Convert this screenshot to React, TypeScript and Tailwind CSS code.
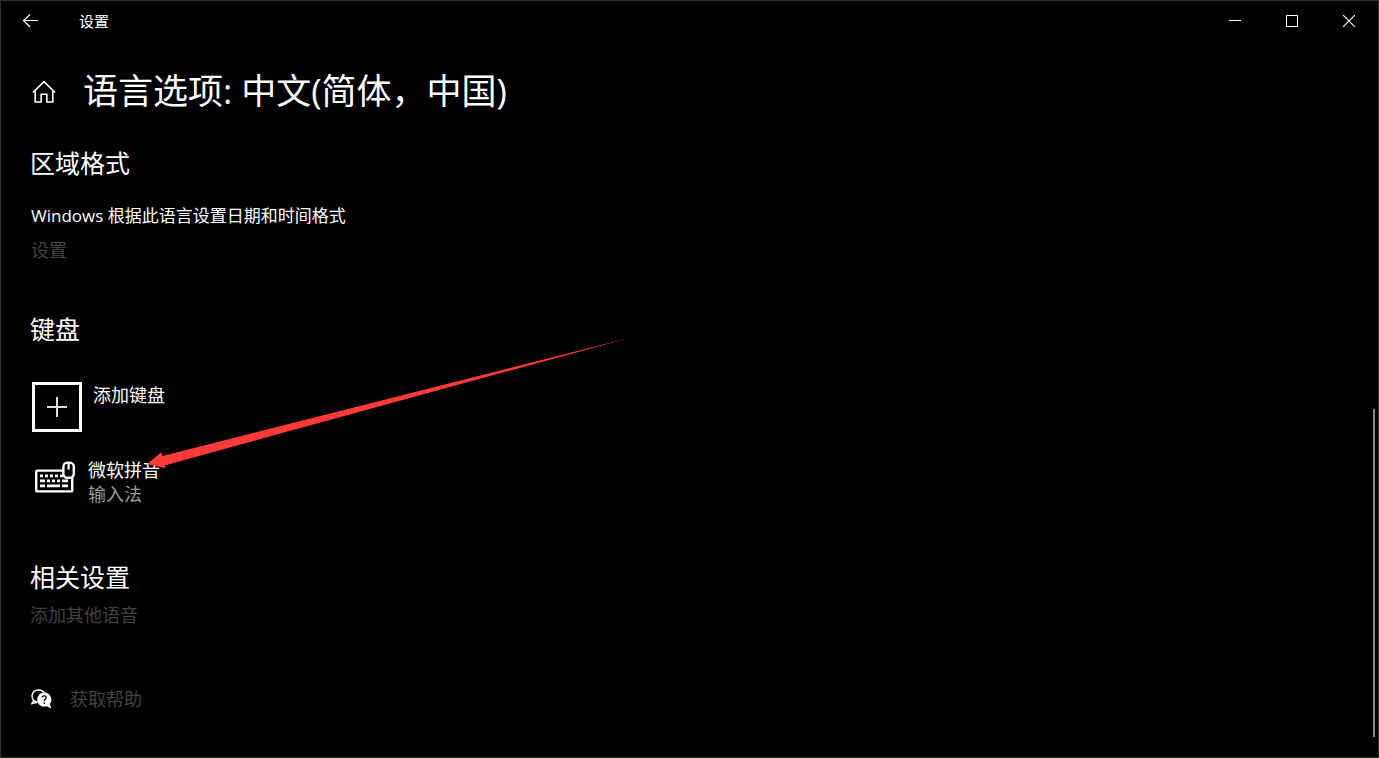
import type { ReactNode } from "react";

const fontStack = "font-['Open_Sans','Noto_Sans_CJK_SC',sans-serif]";

function TitleBar() {
  return (
    <header className="flex h-10 items-center pr-px">
      <button type="button" aria-label="返回" className="flex h-10 w-[58px] items-center justify-center">
        <svg width="16" height="14" viewBox="0 0 16 14" fill="none" stroke="#fff" strokeWidth="1.2">
          <path d="M16 6.5H1.5M8 0.5L1.5 6.5L8 13" />
        </svg>
      </button>
      <span className="flex-1 pl-5 text-[15px] leading-5">设置</span>
      <button type="button" aria-label="最小化" className="flex h-10 w-[57px] items-center justify-center">
        <svg width="12" height="12" viewBox="0 0 12 12" shapeRendering="crispEdges">
          <path d="M0 5h12v1H0z" fill="#fff" />
        </svg>
      </button>
      <button type="button" aria-label="最大化" className="flex h-10 w-[57px] items-center justify-center">
        <svg width="12" height="12" viewBox="0 0 12 12" fill="none" stroke="#fff">
          <path d="M.5 .5h11v11H.5z" />
        </svg>
      </button>
      <button type="button" aria-label="关闭" className="flex h-10 w-[57px] items-center justify-center">
        <svg width="12" height="12" viewBox="0 0 12 12" fill="none" stroke="#fff" strokeWidth="1.1">
          <path d="M0 0L12 12M12 0L0 12" />
        </svg>
      </button>
    </header>
  );
}

function HomeIcon() {
  return (
    <svg width="24" height="23" viewBox="0 0 24 23" fill="none" stroke="#fff" strokeWidth="1.6">
      <path d="M1 12.5L12 1.6L23 12.5" />
      <path d="M3.2 10.7V22H9.2V14.3H14.8V22H20.8V10.7" />
    </svg>
  );
}

function KeyboardIcon() {
  return (
    <svg width="42" height="32" viewBox="0 0 42 32" fill="none">
      <rect x="1.2" y="9.6" width="36" height="20.8" rx="1" stroke="#fff" strokeWidth="2.4" />
      <g fill="#fff">
        <path d="M5 13.6h3v2.6H5zM10 13.6h3v2.6h-3zM15 13.6h3v2.6h-3zM20 13.6h3v2.6h-3zM25 13.6h3v2.6h-3z" />
        <path d="M5 18.6h5v2.6H5zM12 18.6h3v2.6h-3zM17 18.6h3v2.6h-3zM22 18.6h3v2.6h-3zM27 18.6h6v2.6h-6z" />
        <path d="M5 23.6h5v2.6H5zM12 23.6h13v2.6H12zM27 23.6h6v2.6h-6z" />
      </g>
      <rect x="28.4" y="1.6" width="10.4" height="15.2" rx="4" fill="#000" stroke="#fff" strokeWidth="2.4" />
      <path d="M33.6 2V8.6" stroke="#fff" strokeWidth="2.2" />
    </svg>
  );
}

function HelpIcon() {
  return (
    <svg width="21" height="21" viewBox="0 0 21 21" fill="none">
      <path d="M2.8 11.2L1 14.5L6.5 13.2C3 12.5 1 9.8 1 6.8C1 3.4 4 1 7.6 1C10 1 12 2 13.2 3.6" stroke="#fff" strokeWidth="1.4" />
      <path d="M13.2 3.6A7 7 0 1 0 15.5 17.2L20.4 19.4L18.8 15A7 7 0 0 0 13.2 3.6Z" fill="#fff" />
      <path d="M11.2 8.6C11.2 6.2 15.2 6.2 15.2 8.5C15.2 10.2 13.2 10.2 13.2 12.2M13.2 13.6V15.1" stroke="#000" strokeWidth="1.3" />
    </svg>
  );
}

function Heading({ children }: { children: ReactNode }) {
  return <h2 className="text-[25px] leading-9">{children}</h2>;
}

function PointerArrow() {
  return (
    <svg
      className="pointer-events-none absolute top-[335px] left-[146px]"
      width="486"
      height="136"
      viewBox="0 0 486 136"
      aria-hidden="true"
    >
      <path d="M0.5 128L14.3 116L15.5 120L484 1.4L17.6 129.4L18.8 132.2Z" fill="#ff3a38" />
    </svg>
  );
}

export default function App() {
  return (
    <div className={`relative flex min-h-screen flex-col border border-[#2c3132] bg-black text-white ${fontStack}`}>
      <TitleBar />
      <div className="flex items-center gap-[27px] px-[31px] pt-6">
        <a href="#home" aria-label="主页" className="shrink-0">
          <HomeIcon />
        </a>
        <h1 className="text-[35px] leading-[52px]">语言选项: 中文(简体，中国)</h1>
      </div>
      <main className="px-[29px] text-lg leading-6">
        <section className="pt-7">
          <Heading>区域格式</Heading>
          <p className="pt-[23px] pl-px text-[17px] leading-6">
            Windows 根据此语言设置日期和时间格式
          </p>
          <a href="#region" className="mt-[10px] block w-fit pl-px text-[#404040]">设置</a>
        </section>
        <section className="pt-[49px]">
          <Heading>键盘</Heading>
          <button type="button" className="mt-[35px] flex items-start gap-[11px] pl-[2px] text-left">
            <span className="flex size-[50px] items-center justify-center border-3 border-white">
              <svg width="20" height="20" viewBox="0 0 20 20" fill="#e0e0e0" shapeRendering="crispEdges">
                <path d="M9 0h2v9h9v2h-9v9H9v-9H0V9h9z" />
              </svg>
            </span>
            <span className="pt-px">添加键盘</span>
          </button>
          <button type="button" className="mt-[26px] flex items-start gap-[11px] pl-[5px] text-left">
            <span className="pt-[3px]">
              <KeyboardIcon />
            </span>
            <span className="flex flex-col">
              <span>微软拼音</span>
              <span className="text-[#9a9a9a]">输入法</span>
            </span>
          </button>
        </section>
        <section className="pt-[53px]">
          <Heading>相关设置</Heading>
          <a href="#speech" className="mt-2 block w-fit text-[#404040]">添加其他语音</a>
        </section>
        <a href="#help" className="mt-[60px] flex w-fit items-center gap-[18px] pl-px text-[#404040]">
          <HelpIcon />
          <span>获取帮助</span>
        </a>
      </main>
      <PointerArrow />
      <div className="absolute right-[3px] bottom-5 h-[328px] w-[2px] bg-[#858585]" />
    </div>
  );
}
